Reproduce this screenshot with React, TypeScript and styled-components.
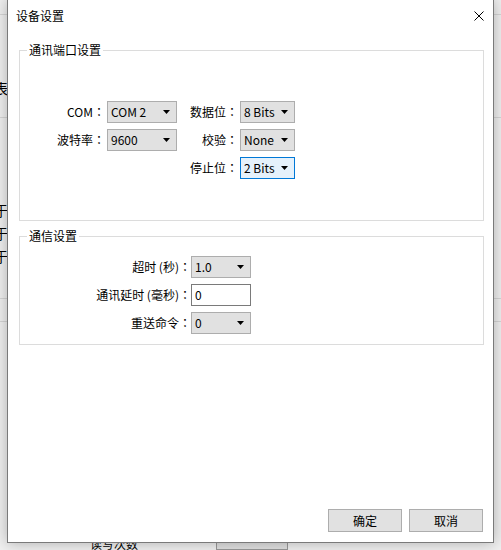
import React from 'react'
import styled, { createGlobalStyle } from 'styled-components'

const GlobalStyle = createGlobalStyle`
  html, body {
    margin: 0;
    padding: 0;
  }
  body {
    width: 501px;
    height: 550px;
    overflow: hidden;
    background: #f0f0f0;
    font-family: 'Noto Sans CJK SC', 'Noto Sans', sans-serif;
    font-size: 12px;
    color: #000;
  }
`

const Screen = styled.div`
  position: relative;
  width: 501px;
  height: 550px;
  overflow: hidden;
`

// the application window sitting behind the dialog
const BackApp = styled.div`
  display: flex;
  flex-direction: column;
  width: 501px;
  height: 550px;
  background: #f0f0f0;
`

const BackRow = styled.div<{ $h: number; $line?: boolean }>`
  display: flex;
  align-items: flex-end;
  height: ${(p) => p.$h}px;
  border-bottom: ${(p) => (p.$line ? '1px solid #d6d6d6' : 'none')};
  font-size: 14px;
  line-height: 23px;
  flex-shrink: 0;
`

const BackText = styled.span`
  margin-left: -6px;
`

const BackFooter = styled.div`
  display: flex;
  align-items: center;
  gap: 78px;
  margin-top: auto;
  padding: 0 0 0 90px;
  height: 14px;
  font-size: 12px;
`

const BackBox = styled.div`
  width: 70px;
  height: 12px;
  border: 1px solid #999;
  background: #e1e1e1;
`

const Dialog = styled.div`
  position: absolute;
  left: 7px;
  top: -1px;
  width: 487px;
  height: 544px;
  box-sizing: border-box;
  display: flex;
  flex-direction: column;
  background: #fff;
  border: 1px solid #7a7a7a;
  box-shadow: 0 0 14px rgba(0, 0, 0, 0.28);
`

const TitleBar = styled.div`
  display: flex;
  align-items: center;
  justify-content: space-between;
  height: 31px;
  padding: 0 9px 0 8px;
  flex-shrink: 0;
`

const Title = styled.span`
  font-size: 12px;
  line-height: 14px;
`

const Body = styled.div`
  display: flex;
  flex-direction: column;
  flex: 1;
  padding: 12px 9px 10px 11px;
`

const Group = styled.fieldset<{ $top: number; $bottom: number }>`
  margin: 0;
  min-width: 0;
  padding: ${(p) => p.$top}px 0 ${(p) => p.$bottom}px 0;
  border: 1px solid #dcdcdc;
  & + & {
    margin-top: 8px;
  }
`

const Legend = styled.legend`
  margin-left: 7px;
  padding: 0 2px;
  font-size: 12px;
  line-height: 14px;
`

const PortGrid = styled.div`
  display: grid;
  grid-template-columns: 87px 70px 63px 55px;
  grid-auto-rows: 22px;
  row-gap: 6px;
`

const CommGrid = styled.div`
  display: grid;
  grid-template-columns: 171px 60px;
  grid-auto-rows: 22px;
  row-gap: 6px;
`

const LabelText = styled.span<{ $pad: number }>`
  align-self: center;
  text-align: right;
  padding-right: ${(p) => p.$pad}px;
  white-space: nowrap;
  line-height: 14px;
`

// centred full-width colon, as the Windows UI font draws it
const Colon = styled.span`
  font-family: 'Noto Sans CJK TC', 'Noto Sans CJK SC', sans-serif;
`

const SelectBox = styled.div<{ $focused?: boolean }>`
  display: flex;
  align-items: center;
  justify-content: space-between;
  box-sizing: border-box;
  height: 22px;
  padding: 0 6px 0 3px;
  border: 1px solid ${(p) => (p.$focused ? '#0078d7' : '#adadad')};
  background: ${(p) => (p.$focused ? '#e5f1fb' : '#e1e1e1')};
  line-height: 14px;
`

const TextInput = styled.div`
  box-sizing: border-box;
  height: 22px;
  padding: 0 3px;
  border: 1px solid #7a7a7a;
  background: #fff;
  line-height: 20px;
`

const Footer = styled.div`
  display: flex;
  justify-content: flex-end;
  gap: 7px;
  margin-top: auto;
  padding-right: 1px;
`

const Button = styled.div`
  display: flex;
  align-items: center;
  justify-content: center;
  box-sizing: border-box;
  width: 74px;
  height: 23px;
  border: 1px solid #adadad;
  background: #e1e1e1;
  line-height: 14px;
`

const Label = ({ text, pad = 2 }: { text: string; pad?: number }) => (
  <LabelText $pad={pad}>
    {text}
    <Colon>：</Colon>
  </LabelText>
)

const ArrowIcon = () => (
  <svg width="7" height="4" viewBox="0 0 7 4">
    <path d="M0 0 H7 L3.5 4 Z" fill="#000" />
  </svg>
)

const Select = ({ value, focused }: { value: string; focused?: boolean }) => (
  <SelectBox $focused={focused}>
    <span>{value}</span>
    <ArrowIcon />
  </SelectBox>
)

const CloseIcon = () => (
  <svg width="10" height="10" viewBox="0 0 10 10">
    <path d="M0.5 0.5 L9.5 9.5 M9.5 0.5 L0.5 9.5" stroke="#000" strokeWidth="1" />
  </svg>
)

export default function App() {
  return (
    <Screen>
      <GlobalStyle />
      <BackApp>
        <BackRow $h={14} $line />
        <BackRow $h={85}>
          <BackText>表</BackText>
        </BackRow>
        <BackRow $h={17} $line />
        <BackRow $h={104}>
          <BackText>于</BackText>
        </BackRow>
        <BackRow $h={23}>
          <BackText>于</BackText>
        </BackRow>
        <BackRow $h={23}>
          <BackText>于</BackText>
        </BackRow>
        <BackRow $h={30} $line />
        <BackRow $h={22} $line />
        <BackFooter>
          <span>读写次数</span>
          <BackBox />
        </BackFooter>
      </BackApp>

      <Dialog>
        <TitleBar>
          <Title>设备设置</Title>
          <CloseIcon />
        </TitleBar>
        <Body>
          <Group $top={44} $bottom={41}>
            <Legend>通讯端口设置</Legend>
            <PortGrid>
              <Label text="COM" />
              <Select value="COM 2" />
              <Label text="数据位" />
              <Select value="8 Bits" />

              <Label text="波特率" />
              <Select value="9600" />
              <Label text="校验" />
              <Select value="None" />

              <span />
              <span />
              <Label text="停止位" />
              <Select value="2 Bits" focused />
            </PortGrid>
          </Group>

          <Group $top={13} $bottom={10}>
            <Legend>通信设置</Legend>
            <CommGrid>
              <Label text="超时 (秒)" pad={0} />
              <Select value="1.0" />
              <Label text="通讯延时 (毫秒)" pad={0} />
              <TextInput>0</TextInput>
              <Label text="重送命令" pad={0} />
              <Select value="0" />
            </CommGrid>
          </Group>

          <Footer>
            <Button>确定</Button>
            <Button>取消</Button>
          </Footer>
        </Body>
      </Dialog>
    </Screen>
  )
}
